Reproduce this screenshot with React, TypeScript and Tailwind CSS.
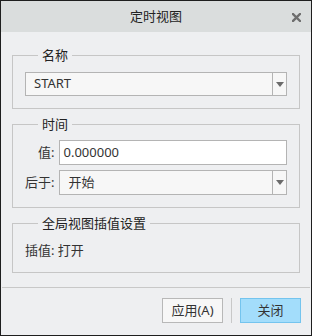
import React from "react";

const font = { fontFamily: '"Noto Sans", "Noto Sans CJK SC", sans-serif' };

function Arrow() {
  return (
    <svg width="8" height="5" viewBox="0 0 8 5">
      <path d="M0 0 H8 L4 5 Z" fill="#6b6b6b" />
    </svg>
  );
}

function Combo({ value, h }: { value: string; h: string }) {
  return (
    <div className={`flex ${h} border border-[#b4b4b4] bg-[#f7f7f7]`}>
      <div className="flex flex-1 items-center pl-[8px] text-[13px] text-[#333]">{value}</div>
      <div className="flex w-[14px] items-center justify-center border-l border-[#b4b4b4]">
        <Arrow />
      </div>
    </div>
  );
}

export default function App() {
  return (
    <div
      className="flex h-[336px] w-[312px] flex-col border border-[#1e1e1e] bg-[#eeeff1] text-[13px] text-[#333]"
      style={font}
    >
      <div className="relative flex h-[31px] items-center justify-center bg-[#dadddd]">
        <span className="text-[13px] text-[#222]">定时视图</span>
        <svg
          className="absolute right-[10px] top-[12px]"
          width="9"
          height="9"
          viewBox="0 0 9 9"
        >
          <path d="M1 1 L8 8 M8 1 L1 8" stroke="#6e6e6e" strokeWidth="2.4" strokeLinecap="square" />
        </svg>
      </div>

      <fieldset className="mx-[11px] mt-[14px] border border-[#c6c6c6] px-[12px] pb-[12px] pt-[8px]">
        <legend className="ml-[13px] px-[4px] text-[13px] leading-[18px] text-[#222]">名称</legend>
        <Combo value="START" h="h-[24px]" />
      </fieldset>

      <fieldset className="mx-[11px] mt-[6px] border border-[#c6c6c6] px-[12px] pb-[12px] pt-[7px]">
        <legend className="ml-[13px] px-[4px] text-[13px] leading-[18px] text-[#222]">时间</legend>
        <div className="grid grid-cols-[auto_1fr] items-center gap-x-[5px] gap-y-[5px]">
          <span className="text-right">值:</span>
          <div className="flex h-[25px] items-center border border-[#b4b4b4] bg-white pl-[3px] text-[13px] text-[#333]">
            0.000000
          </div>
          <span className="text-right">后于:</span>
          <Combo value="开始" h="h-[25px]" />
        </div>
      </fieldset>

      <fieldset className="mx-[11px] mt-[6px] border border-[#c6c6c6] px-[12px] pb-[13px] pt-[9px]">
        <legend className="ml-[13px] px-[4px] text-[13px] leading-[18px] text-[#222]">全局视图插值设置</legend>
        <div className="leading-[18px]">插值: 打开</div>
      </fieldset>

      <div className="mt-auto border-t border-[#c8c8c8] mx-[1px]" />
      <div className="flex items-center justify-end gap-[8px] px-[10px] pb-[12px] pt-[10px]">
        <button className="h-[25px] w-[61px] border border-[#b8b8b8] bg-[#f7f7f7] text-[13px] text-[#333]">
          应用(A)
        </button>
        <div className="h-[25px] w-px bg-[#c8c8c8]" />
        <button className="h-[25px] w-[61px] border border-[#74c4ee] bg-[#a3ddfb] text-[13px] text-[#333]">
          关闭
        </button>
      </div>
    </div>
  );
}
